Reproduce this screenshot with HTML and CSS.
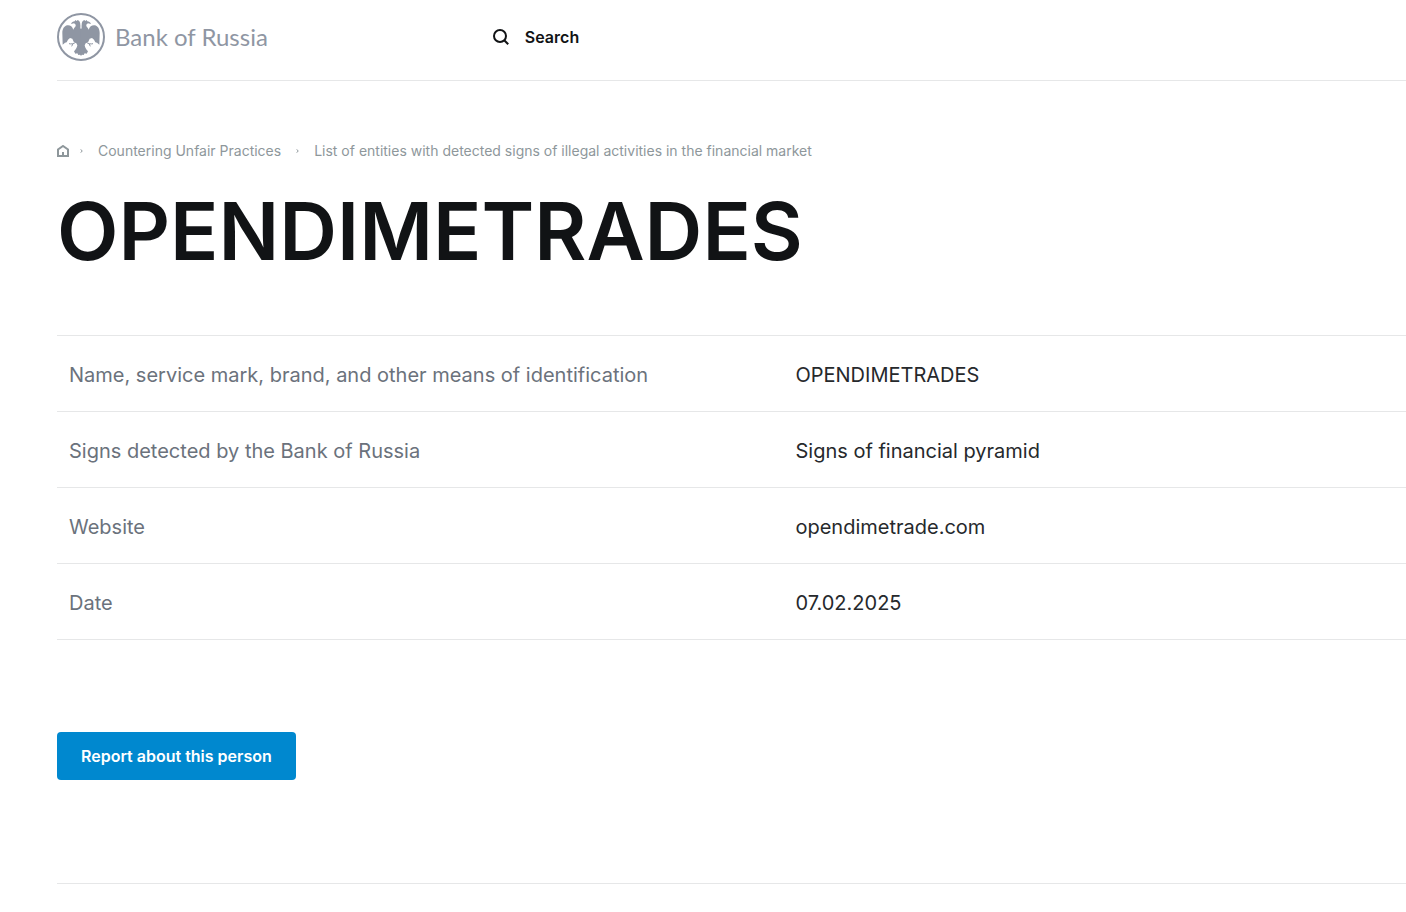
FILE: index.html
```html
<!DOCTYPE html>
<html lang="en">
<head>
  <meta charset="UTF-8">
  <meta name="viewport" content="width=device-width, initial-scale=1.0">
  <title>OPENDIMETRADES | Bank of Russia</title>
  <link rel="stylesheet" href="styles.css">
</head>
<body>
  <header class="header">
    <a class="logo" href="#">
      <svg class="logo-emblem" viewBox="21 21 144 144" aria-hidden="true">
        <circle cx="93" cy="93" r="69" fill="none" stroke="currentColor" stroke-width="6"/>
        <g id="half" fill="currentColor">
          <path d="M94 70L92 68C90 64 92 61 91 57C91 50 89 44 83 42L80 45L76 42L74 46C69 46 65 49 63 54L72 52C75 54 78 56 77 60C75 64 71 67 70 71C67 61 60 57 52 58C42 60 37 69 37 81L38 116L45 110L50 109L54 101L60 96L67 98L71 107L79 112L82 118C81 125 77 131 72 136L76 143L82 142L85 147L90 146L94 149Z"/>
          <path d="M77 109C71 113 64 115 57 113M69 113L65 121" fill="none" stroke="currentColor" stroke-width="3"/>
        </g>
        <use href="#half" transform="translate(186 0) scale(-1 1)"/>
      </svg>
      <span class="logo-text">Bank of Russia</span>
    </a>
    <button class="search-button" type="button">
      <svg class="search-icon" viewBox="0 0 18 18" aria-hidden="true">
        <circle cx="8" cy="8" r="6" fill="none" stroke="currentColor" stroke-width="2"/>
        <path d="M12.2 12.2L16.2 16.2" stroke="currentColor" stroke-width="2"/>
      </svg>
      Search
    </button>
  </header>

  <main>
    <nav class="breadcrumbs" aria-label="Breadcrumb">
      <a class="home-link" href="#" aria-label="Home">
        <svg class="home-icon" viewBox="0 0 12 12" aria-hidden="true">
          <path d="M1 11V4.5L6 1L11 4.5V11Z" fill="none" stroke="currentColor" stroke-width="2"/>
          <path d="M6 7V11" stroke="currentColor" stroke-width="2"/>
        </svg>
      </a>
      <svg class="arrow" viewBox="0 0 3 4" aria-hidden="true"><path d="M.5 .3L2.3 2L.5 3.7" fill="none" stroke="currentColor"/></svg>
      <a href="#">Countering Unfair Practices</a>
      <svg class="arrow" viewBox="0 0 3 4" aria-hidden="true"><path d="M.5 .3L2.3 2L.5 3.7" fill="none" stroke="currentColor"/></svg>
      <a href="#">List of entities with detected signs of illegal activities in the financial market</a>
    </nav>

    <h1>OPENDIMETRADES</h1>

    <table class="details">
      <tr>
        <th scope="row">Name, service mark, brand, and other means of identification</th>
        <td>OPENDIMETRADES</td>
      </tr>
      <tr>
        <th scope="row">Signs detected by the Bank of Russia</th>
        <td>Signs of financial pyramid</td>
      </tr>
      <tr>
        <th scope="row">Website</th>
        <td>opendimetrade.com</td>
      </tr>
      <tr>
        <th scope="row">Date</th>
        <td>07.02.2025</td>
      </tr>
    </table>

    <button class="report-button" type="button">Report about this person</button>
  </main>

  <footer class="footer"></footer>
</body>
</html>
```

FILE: styles.css
```css
body {
  margin: 0;
  padding-left: 57px;
  background-color: #fff;
  color: #26292c;
  font-family: Inter, "Liberation Sans", sans-serif;
}

a {
  color: inherit;
  text-decoration: none;
}

.header {
  display: flex;
  align-items: center;
  gap: 224px;
  padding: 13px 0 19px;
  border-bottom: 1px solid #e6e7e8;
}

.logo {
  display: flex;
  align-items: center;
  gap: 10px;
  color: #8f96a3;
}

.logo-emblem {
  width: 48px;
  height: 48px;
}

.logo-text {
  font-family: Lato, sans-serif;
  font-size: 24px;
  line-height: 32px;
}

.search-button {
  display: flex;
  align-items: center;
  gap: 15px;
  padding: 0;
  border: none;
  background: none;
  color: #111315;
  font-family: inherit;
  font-size: 16px;
  font-weight: 600;
  cursor: pointer;
}

.search-icon {
  width: 18px;
  height: 18px;
}

.breadcrumbs {
  display: flex;
  align-items: center;
  gap: 15px;
  margin-top: 60px;
  color: #8e979b;
  font-size: 14px;
  line-height: 20px;
}

.home-link {
  display: flex;
  margin-right: -4px;
}

.home-icon {
  width: 12px;
  height: 12px;
}

.arrow {
  width: 3px;
  height: 4px;
}

h1 {
  margin: 22px 0 56px;
  color: #111315;
  font-size: 80px;
  font-weight: 600;
  line-height: 96px;
}

.details {
  width: 100%;
  border-collapse: collapse;
  border-top: 1px solid #e6e7e8;
  font-size: 20px;
  line-height: 27px;
}

.details th,
.details td {
  padding: 26px 12px 22px;
  border-bottom: 1px solid #e6e7e8;
  text-align: left;
  font-weight: 400;
}

.details td {
  padding-left: 10px;
}

.details th {
  width: 54%;
  color: #6b727c;
}

.report-button {
  display: block;
  margin-top: 92px;
  padding: 14px 24px;
  border: none;
  border-radius: 4px;
  background-color: #0088cf;
  color: #fff;
  font-family: inherit;
  font-size: 16px;
  font-weight: 600;
  line-height: 20px;
  cursor: pointer;
}

.footer {
  margin-top: 103px;
  border-top: 1px solid #e6e7e8;
}
```
